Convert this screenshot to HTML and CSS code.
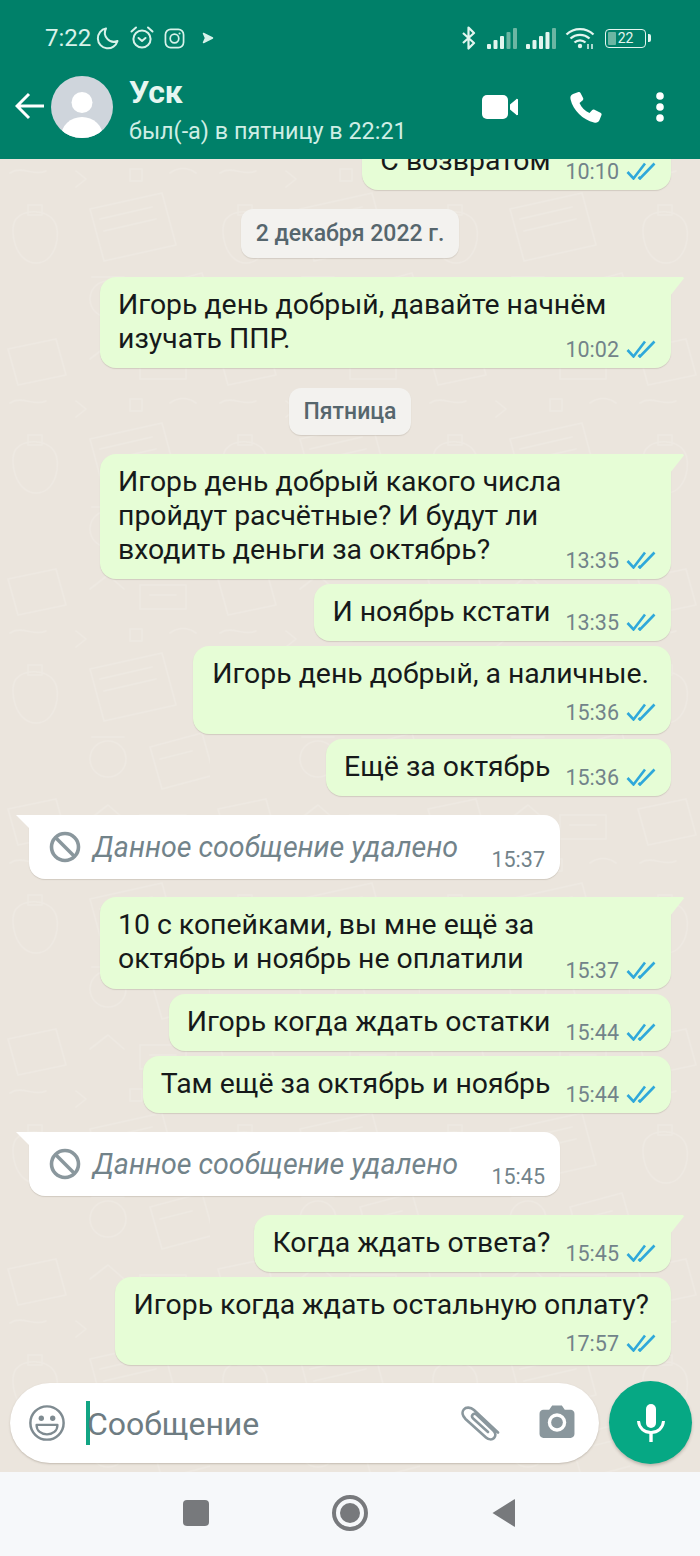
FILE: index.html
```html
<!DOCTYPE html>
<html lang="ru">
<head>
<meta charset="utf-8">
<title>Чат</title>
<link rel="stylesheet" href="styles.css">
</head>
<body>
<div class="phone">
  <header class="top">
    <div class="status">
      <div class="status-left">
        <span class="clock">7:22</span>
        <svg class="si moon" viewBox="0 0 24 24"><path d="M10 2.500A10 10 0 1 0 21.500 15 9 9 0 0 1 10 2.500Z" fill="none" stroke="#d8f2ea" stroke-width="2" stroke-linejoin="round"/></svg>
        <svg class="si alarm" viewBox="0 0 26 26"><circle cx="13" cy="14" r="8.600" fill="none" stroke="#d8f2ea" stroke-width="2"/><path d="M9.500 13l3.500 3 3.500-3M2.500 6.500 7 2.500M23.500 6.500 19 2.500" fill="none" stroke="#d8f2ea" stroke-width="2" stroke-linecap="round" stroke-linejoin="round"/></svg>
        <svg class="si insta" viewBox="0 0 22 22"><rect x="1.500" y="1.500" width="19" height="19" rx="5.500" fill="none" stroke="#d8f2ea" stroke-width="1.800"/><circle cx="11" cy="11" r="4.500" fill="none" stroke="#d8f2ea" stroke-width="1.800"/><circle cx="16.300" cy="5.700" r="1.100" fill="#d8f2ea"/></svg>
        <svg class="si play" viewBox="0 0 12 12"><path d="M1.500 1.500 10.500 6 1.500 10.500 3.500 6Z" fill="#d8f2ea" stroke="#d8f2ea" stroke-width="1.500" stroke-linejoin="round"/></svg>
      </div>
      <div class="status-right">
        <svg class="si bt" viewBox="0 0 16 24"><path d="M2 7l11 10-5.500 5.500V1.500L13 7 2 17" fill="none" stroke="#e3f5ef" stroke-width="2.200" stroke-linejoin="round"/></svg>
        <svg class="si sig" viewBox="0 0 31 21"><rect x="0" y="16" width="4" height="5" rx="1" fill="#e3f5ef"/><rect x="6.500" y="12" width="4" height="9" rx="1" fill="#e3f5ef"/><rect x="13" y="8" width="4" height="13" rx="1" fill="#e3f5ef"/><rect x="19.500" y="4" width="4" height="17" rx="1" fill="#6cb6a3"/><rect x="26" y="0" width="4" height="21" rx="1" fill="#6cb6a3"/></svg>
        <svg class="si sig" viewBox="0 0 31 21"><rect x="0" y="16" width="4" height="5" rx="1" fill="#e3f5ef"/><rect x="6.500" y="12" width="4" height="9" rx="1" fill="#e3f5ef"/><rect x="13" y="8" width="4" height="13" rx="1" fill="#e3f5ef"/><rect x="19.500" y="4" width="4" height="17" rx="1" fill="#e3f5ef"/><rect x="26" y="0" width="4" height="21" rx="1" fill="#6cb6a3"/></svg>
        <svg class="si wifi" viewBox="0 0 30 22"><path d="M1.500 7.500a19.500 19.500 0 0 1 27 0M5.500 11.500a14 14 0 0 1 19 0M9.500 15.500a8 8 0 0 1 11 0" fill="none" stroke="#e3f5ef" stroke-width="2.300"/><circle cx="15" cy="19" r="2.200" fill="#e3f5ef"/><path d="M23 17v5M27 17v5" stroke="#e3f5ef" stroke-width="1.500"/></svg>
        <div class="batt"><span class="batt-level"></span><span class="batt-num">22</span></div>
        <span class="batt-tip"></span>
      </div>
    </div>
    <div class="appbar">
      <svg class="back" viewBox="0 0 30 28"><path d="M29 14H3M14 2 2 14l12 12" fill="none" stroke="#fff" stroke-width="3"/></svg>
      <div class="avatar">
        <svg viewBox="0 0 62 62"><circle cx="31" cy="26.500" r="10.500" fill="#fff"/><ellipse cx="31" cy="61" rx="21" ry="20" fill="#fff"/></svg>
      </div>
      <div class="who">
        <div class="name">Уск</div>
        <div class="seen">был(-а) в пятницу в 22:21</div>
      </div>
      <div class="actions">
        <svg class="video" viewBox="0 0 36 24"><rect x="0" y="0" width="26" height="24" rx="5" fill="#fff"/><path d="M28 9.500 34 4.500a1 1 0 0 1 2 .8v13.400a1 1 0 0 1-2 .8L28 14.500Z" fill="#fff"/></svg>
        <svg class="phone-ic" viewBox="0 0 32 32"><path d="M8.500 1 3 3C.5 4 0 6 .6 8.500 3 19 13 29 24 31.500c2.500.5 4.500 0 5.500-2.500L31.500 24c.4-1-.1-1.800-1-2.300l-6-3c-1-.5-1.800-.3-2.500.5L19.500 22C15 20 11.500 16.500 9.500 12l3-2.500c.8-.7 1-1.500.6-2.500L10.500 2c-.5-1-1.200-1.300-2-1Z" fill="#fff"/></svg>
        <svg class="dots" viewBox="0 0 8 30"><circle cx="4" cy="4" r="3.800" fill="#fff"/><circle cx="4" cy="15" r="3.800" fill="#fff"/><circle cx="4" cy="26" r="3.800" fill="#fff"/></svg>
      </div>
    </div>
  </header>

  <main class="chat">
    <svg class="doodles" width="700" height="1313" aria-hidden="true">
      <defs>
        <pattern id="wall" width="210" height="230" patternUnits="userSpaceOnUse">
          <g fill="none" stroke="#eee9e2" stroke-width="1.600" stroke-linejoin="round" stroke-linecap="round">
            <path d="M90 50l72-16 14 52-72 16ZM100 60l52-12M104 72l52-12"/>
            <path d="M16 60c8-10 30-10 38 2s2 42-18 42-28-32-20-44ZM28 46h14v10H28Z"/>
            <circle cx="108" cy="140" r="18"/><path d="M92 118h32M150 128l52-14 12 42-52 14ZM160 140l32-8"/>
            <path d="M8 190l48-10 10 36-48 10ZM90 200l18-14 16 14M140 196h46v24h-46ZM150 206h26"/>
            <path d="M10 14c12-8 24 4 36-2M76 12l10 8-10 8M130 10h12v12h-12ZM170 14c8-6 18-6 26 0"/>
          </g>
        </pattern>
      </defs>
      <rect width="700" height="1313" fill="url(#wall)"/>
    </svg>

    <div class="row out first"><div class="bubble inline"><span class="text">С возвратом</span><span class="meta"><time>10:10</time><svg class="ticks" viewBox="0 0 30 18"><use href="#tick"/></svg></span></div></div>

    <div class="chip chip-a">2 декабря 2022 г.</div>

    <div class="row out gap-chip"><div class="bubble wide two tail"><span class="text">Игорь день добрый, давайте начнём<br>изучать ППР.</span><span class="meta"><time>10:02</time><svg class="ticks" viewBox="0 0 30 18"><use href="#tick"/></svg></span></div></div>

    <div class="chip chip-b">Пятница</div>

    <div class="row out gap-chip"><div class="bubble wide three tail"><span class="text">Игорь день добрый какого числа<br>пройдут расчётные? И будут ли<br>входить деньги за октябрь?</span><span class="meta"><time>13:35</time><svg class="ticks" viewBox="0 0 30 18"><use href="#tick"/></svg></span></div></div>
    <div class="row out"><div class="bubble inline"><span class="text">И ноябрь кстати</span><span class="meta"><time>13:35</time><svg class="ticks" viewBox="0 0 30 18"><use href="#tick"/></svg></span></div></div>
    <div class="row out"><div class="bubble stacked"><span class="text">Игорь день добрый, а наличные.</span><span class="meta"><time>15:36</time><svg class="ticks" viewBox="0 0 30 18"><use href="#tick"/></svg></span></div></div>
    <div class="row out"><div class="bubble inline"><span class="text">Ещё за октябрь</span><span class="meta"><time>15:36</time><svg class="ticks" viewBox="0 0 30 18"><use href="#tick"/></svg></span></div></div>

    <div class="row in"><div class="deleted"><svg class="ban" viewBox="0 0 32 32"><circle cx="16" cy="16" r="13.500" fill="none" stroke="#8a979d" stroke-width="3.600"/><path d="M6.500 6.500l19 19" stroke="#8a979d" stroke-width="3.600"/></svg><span class="del-text">Данное сообщение удалено</span><time>15:37</time></div></div>

    <div class="row out gap-in"><div class="bubble wide tail"><span class="text">10 с копейками, вы мне ещё за<br>октябрь и ноябрь не оплатили</span><span class="meta"><time>15:37</time><svg class="ticks" viewBox="0 0 30 18"><use href="#tick"/></svg></span></div></div>
    <div class="row out"><div class="bubble inline"><span class="text">Игорь когда ждать остатки</span><span class="meta"><time>15:44</time><svg class="ticks" viewBox="0 0 30 18"><use href="#tick"/></svg></span></div></div>
    <div class="row out"><div class="bubble inline"><span class="text">Там ещё за октябрь и ноябрь</span><span class="meta"><time>15:44</time><svg class="ticks" viewBox="0 0 30 18"><use href="#tick"/></svg></span></div></div>

    <div class="row in"><div class="deleted"><svg class="ban" viewBox="0 0 32 32"><circle cx="16" cy="16" r="13.500" fill="none" stroke="#8a979d" stroke-width="3.600"/><path d="M6.500 6.500l19 19" stroke="#8a979d" stroke-width="3.600"/></svg><span class="del-text">Данное сообщение удалено</span><time>15:45</time></div></div>

    <div class="row out gap-in-b"><div class="bubble inline tail"><span class="text">Когда ждать ответа?</span><span class="meta"><time>15:45</time><svg class="ticks" viewBox="0 0 30 18"><use href="#tick"/></svg></span></div></div>
    <div class="row out"><div class="bubble stacked"><span class="text">Игорь когда ждать остальную оплату?</span><span class="meta"><time>17:57</time><svg class="ticks" viewBox="0 0 30 18"><use href="#tick"/></svg></span></div></div>

    <div class="composer">
      <div class="field">
        <svg class="emoji" viewBox="0 0 40 40"><circle cx="20" cy="20" r="17.500" fill="none" stroke="#7f8b91" stroke-width="2.600"/><circle cx="14" cy="15" r="2.800" fill="#7f8b91"/><circle cx="26" cy="15" r="2.800" fill="#7f8b91"/><path d="M9 22h22c0 6.500-5 10-11 10S9 28.500 9 22Z" fill="none" stroke="#7f8b91" stroke-width="2.400" stroke-linejoin="round"/></svg>
        <span class="caret"></span>
        <span class="placeholder">Сообщение</span>
        <svg class="clip" viewBox="0 0 40 36"><path d="M37 27.500 13 5C9.500 2 5 1.800 2.800 4.500S1.500 11 4.500 14L25 32.500c2.500 2.200 6 2.500 8 .5s1.800-5-.7-7.500L16 10c-1.500-1.300-3.300-1.500-4.300-.4s-.8 2.800.7 4.200L27 27" fill="none" stroke="#8a979d" stroke-width="2.600" stroke-linecap="round"/></svg>
        <svg class="cam" viewBox="0 0 36 34"><path d="M4 5h6l3-4.500h10L26 5h6c2.200 0 4 1.800 4 4v21c0 2.200-1.800 4-4 4H4c-2.200 0-4-1.800-4-4V9c0-2.200 1.800-4 4-4Z" fill="#8a979d"/><circle cx="18" cy="18" r="9.500" fill="#fff"/><circle cx="18" cy="18" r="6" fill="#8a979d"/></svg>
      </div>
      <div class="mic-btn">
        <svg class="mic" viewBox="0 0 28 38"><rect x="9" y="0" width="10" height="24" rx="5" fill="#fff"/><path d="M1.500 17c.5 7 5.500 11.500 12.500 11.500S26 24 26.500 17" fill="none" stroke="#fff" stroke-width="3"/><rect x="12.300" y="27" width="3.400" height="11" fill="#fff"/></svg>
      </div>
    </div>
  </main>

  <nav class="nav">
    <span class="nav-square"></span>
    <span class="nav-home"><span class="nav-dot"></span></span>
    <svg class="nav-back" viewBox="0 0 24 30"><path d="M23 1.500 1.500 15 23 28.500a.5.5 0 0 0 1-.5V2a.5.5 0 0 0-1-.5Z" fill="#77797c"/></svg>
  </nav>
</div>

<svg class="defs" width="0" height="0" aria-hidden="true"><defs><g id="tick"><path d="M1.500 10 7.500 16.500 19 1.500M12.500 15 14 16.500 28.500 1.500" fill="none" stroke="#2fa8da" stroke-width="2.600"/></g></defs></svg>
</body>
</html>
```
FILE: styles.css
```css
* { box-sizing: border-box; }
html, body { margin: 0; padding: 0; }
body { font-family: Roboto, "Noto Sans", sans-serif; }
.defs { position: absolute; }
.phone { width: 700px; height: 1556px; display: flex; flex-direction: column; overflow: hidden; background: #ebe5dd; }

/* header */
.top { height: 159px; flex: none; background: #008069; color: #fff; position: relative; z-index: 2; padding-top: 22px; }
.status { height: 32px; display: flex; justify-content: space-between; align-items: center; padding: 0 49px 0 45px; }
.status-left, .status-right { display: flex; align-items: center; }
.clock { font-size: 24px; color: #d8f2ea; width: 51px; }
.si { display: block; flex: none; }
.moon { width: 24px; height: 24px; margin-right: 9px; }
.alarm { width: 26px; height: 26px; margin-right: 9px; }
.insta { width: 21px; height: 21px; margin-right: 17px; }
.play { width: 12px; height: 12px; }
.bt { width: 16px; height: 24px; margin-right: 10px; }
.sig { width: 31px; height: 21px; margin-right: 8px; }
.wifi { width: 30px; height: 22px; margin-right: 10px; }
.batt { width: 41px; height: 19px; border: 1.500px solid #e3f5ef; border-radius: 4px; position: relative; display: flex; align-items: center; justify-content: center; }
.batt-level { position: absolute; left: 2px; top: 2px; bottom: 2px; width: 8px; background: #6cb6a3; border-radius: 1px; }
.batt-num { position: relative; font-size: 14px; line-height: 1; color: #e3f5ef; }
.batt-tip { width: 3px; height: 8px; margin-left: 2px; background: #e3f5ef; border-radius: 0 2px 2px 0; }

.appbar { display: flex; align-items: center; height: 75px; padding: 0 0 0 15px; margin-top: 15px; }
.back { width: 30px; height: 28px; flex: none; margin-right: 6px; margin-top: -2px; }
.avatar { width: 62px; height: 62px; flex: none; margin-right: 16px; border-radius: 50%; overflow: hidden; background: #cfd5dc; }
.avatar svg { display: block; width: 62px; height: 62px; }
.who { flex: 1; min-width: 0; padding-top: 10px; }
.name { font-size: 32px; font-weight: 700; line-height: 36px; color: #e6f6f1; margin-top: -4px; }
.seen { font-size: 23.400px; line-height: 28px; color: #cfeee5; margin-top: 7px; white-space: nowrap; }
.actions { display: flex; align-items: center; flex: none; padding-right: 36px; }
.video { width: 36px; height: 24px; margin-right: 52px; }
.phone-ic { width: 32px; height: 32px; margin-right: 54px; }
.dots { width: 8px; height: 30px; }

/* chat */
.chat { flex: 1; min-height: 0; display: flex; flex-direction: column; justify-content: flex-end; overflow: hidden; position: relative; padding-bottom: 8px; background: #ebe5dd; }
.doodles { position: absolute; left: 0; top: 0; display: block; }
.row { display: flex; position: relative; flex: none; margin-top: 5px; padding: 0 29px; }
.row.out { justify-content: flex-end; }
.row.in { justify-content: flex-start; margin-top: 19px; }
.row.first { margin-top: 0; }
.row.gap-chip { margin-top: 19px; }
.row.gap-in { margin-top: 18px; }
.row.gap-in-b { margin-top: 19px; }

.bubble { background: #e6fdd6; border-radius: 16px; padding: 11px 15px 0 19px; position: relative; box-shadow: 0 1px 1px rgba(120, 110, 95, 0.22); }
.bubble.tail { border-top-right-radius: 0; }
.bubble.tail::after { content: ""; position: absolute; right: -13px; top: 0; width: 14px; height: 19px; background: #e6fdd6; clip-path: polygon(0 0, 92% 0, 100% 6%, 0 100%); }
.text { font-size: 28.400px; line-height: 34px; color: #16191a; display: block; white-space: nowrap; }
.meta { display: flex; align-items: center; justify-content: flex-end; gap: 7px; height: 26px; }
.meta time, .deleted time { font-size: 21.500px; color: #72838a; }
.ticks { width: 30px; height: 18px; display: block; }
.bubble.wide { width: 571px; padding-left: 18px; padding-bottom: 13px; }
.bubble.wide.two { height: 91px; }
.bubble.wide.three { height: 125px; }
.bubble.wide .meta { position: absolute; right: 15px; bottom: 6px; }
.bubble.inline { display: flex; gap: 15px; height: 57px; padding-left: 18px; }
.bubble.inline .meta { margin-top: 14px; }
.bubble.stacked { height: 88px; padding-right: 22px; }
.bubble.stacked .meta { margin-top: 8px; margin-right: -7px; }

.chip { align-self: center; position: relative; flex: none; background: #f3f2ef; color: #56666d; font-size: 23px; font-weight: 500; border-radius: 12px; display: flex; align-items: center; justify-content: center; box-shadow: 0 1px 1px rgba(120, 110, 95, 0.2); }
.chip-a { width: 218px; height: 49px; margin-top: 19px; }
.chip-b { width: 122px; height: 47px; margin-top: 20px; }

.deleted { width: 531px; height: 64px; background: #fff; border-radius: 0 16px 16px 16px; display: flex; align-items: center; position: relative; padding-left: 20px; box-shadow: 0 1px 1px rgba(120, 110, 95, 0.22); }
.deleted::before { content: ""; position: absolute; left: -13px; top: 0; width: 14px; height: 14px; background: #fff; clip-path: polygon(0 0, 100% 0, 100% 100%); }
.ban { width: 32px; height: 32px; flex: none; margin-right: 12px; }
.del-text { font-size: 28.600px; font-style: italic; color: #72838a; white-space: nowrap; }
.deleted time { position: absolute; right: 15px; bottom: 7px; }

/* composer */
.composer { display: flex; align-items: center; flex: none; margin-top: 16px; padding: 0 8px 0 10px; position: relative; }
.field { width: 589px; height: 80px; background: #fff; border-radius: 40px; display: flex; align-items: center; padding-left: 18px; box-shadow: 0 1px 2px rgba(120, 110, 95, 0.35); }
.emoji { width: 38px; height: 38px; flex: none; margin-right: 20px; }
.caret { width: 4px; height: 44px; background: #12a584; flex: none; }
.placeholder { font-size: 32px; color: #6e7c82; flex: 1; margin-left: -3px; padding-top: 2px; }
.clip { width: 40px; height: 36px; flex: none; margin-right: 38px; }
.cam { width: 36px; height: 33px; flex: none; margin-right: 24px; margin-top: -3px; }
.mic-btn { width: 83px; height: 83px; margin-left: 10px; border-radius: 50%; background: #06a884; display: flex; align-items: center; justify-content: center; box-shadow: 0 2px 3px rgba(90, 80, 70, 0.3); }
.mic { width: 28px; height: 38px; }

/* nav */
.nav { height: 84px; flex: none; background: #f6f8fa; display: flex; align-items: center; justify-content: center; padding: 0 2px 2px 0; position: relative; }
.nav-square { width: 26px; height: 26px; border-radius: 4px; background: #77797c; margin-right: 123px; }
.nav-home { width: 36px; height: 36px; border: 4px solid #77797c; border-radius: 50%; display: flex; align-items: center; justify-content: center; margin-right: 123px; }
.nav-dot { width: 20px; height: 20px; border-radius: 50%; background: #77797c; }
.nav-back { width: 24px; height: 30px; }
```
